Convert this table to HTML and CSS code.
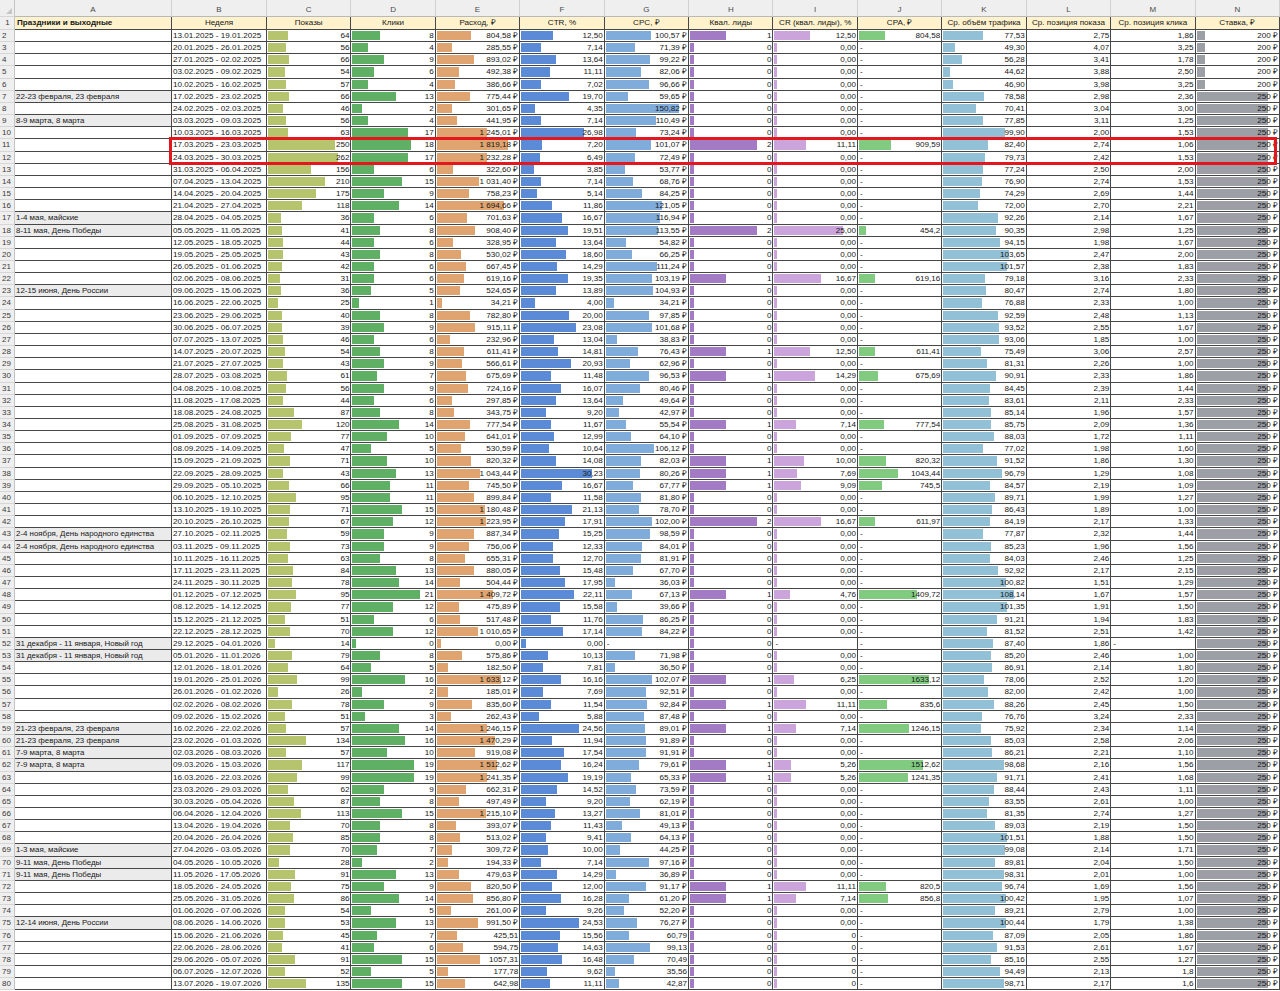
FILE: index.html
```html
<!DOCTYPE html>
<html lang="ru">
<head>
<meta charset="utf-8">
<title>Праздники и выходные</title>
<link rel="stylesheet" href="styles.css">
</head>
<body>
<div class="sheet">
<div class="row letters"><div class="rn corner"></div><div>A</div><div>B</div><div>C</div><div>D</div><div>E</div><div>F</div><div>G</div><div>H</div><div>I</div><div>J</div><div>K</div><div>L</div><div>M</div><div>N</div></div>
<div class="row head"><div class="rn">1</div><div class="a">Праздники и выходные</div><div>Неделя</div><div>Показы</div><div>Клики</div><div>Расход, ₽</div><div>CTR, %</div><div>CPC, ₽</div><div>Квал. лиды</div><div>CR (квал. лиды), %</div><div>CPA, ₽</div><div>Ср. объём трафика</div><div>Ср. позиция показа</div><div>Ср. позиция клика</div><div>Ставка, ₽</div></div>
<div class="row"><div class="rn">2</div><div class="a"></div><div class="b">13.01.2025 - 19.01.2025</div><div class="n bc" style="--v:64">64</div><div class="n bd" style="--v:8">8</div><div class="n be" style="--v:804.58">804,58 ₽</div><div class="n bf" style="--v:12.5">12,50</div><div class="n bg" style="--v:100.57">100,57 ₽</div><div class="n bh" style="--v:1">1</div><div class="n bi" style="--v:12.5">12,50</div><div class="n bj" style="--v:804.58">804,58</div><div class="n bk" style="--v:77.53">77,53</div><div class="n">2,75</div><div class="n">1,86</div><div class="n bn" style="--v:200">200 ₽</div></div>
<div class="row"><div class="rn">3</div><div class="a"></div><div class="b">20.01.2025 - 26.01.2025</div><div class="n bc" style="--v:56">56</div><div class="n bd" style="--v:4">4</div><div class="n be" style="--v:285.55">285,55 ₽</div><div class="n bf" style="--v:7.14">7,14</div><div class="n bg" style="--v:71.39">71,39 ₽</div><div class="n bh" style="--v:0">0</div><div class="n bi" style="--v:0">0,00</div><div class="d">-</div><div class="n bk" style="--v:49.30">49,30</div><div class="n">4,07</div><div class="n">3,25</div><div class="n bn" style="--v:200">200 ₽</div></div>
<div class="row"><div class="rn">4</div><div class="a"></div><div class="b">27.01.2025 - 02.02.2025</div><div class="n bc" style="--v:66">66</div><div class="n bd" style="--v:9">9</div><div class="n be" style="--v:893.02">893,02 ₽</div><div class="n bf" style="--v:13.64">13,64</div><div class="n bg" style="--v:99.22">99,22 ₽</div><div class="n bh" style="--v:0">0</div><div class="n bi" style="--v:0">0,00</div><div class="d">-</div><div class="n bk" style="--v:56.28">56,28</div><div class="n">3,41</div><div class="n">1,78</div><div class="n bn" style="--v:200">200 ₽</div></div>
<div class="row"><div class="rn">5</div><div class="a"></div><div class="b">03.02.2025 - 09.02.2025</div><div class="n bc" style="--v:54">54</div><div class="n bd" style="--v:6">6</div><div class="n be" style="--v:492.38">492,38 ₽</div><div class="n bf" style="--v:11.11">11,11</div><div class="n bg" style="--v:82.06">82,06 ₽</div><div class="n bh" style="--v:0">0</div><div class="n bi" style="--v:0">0,00</div><div class="d">-</div><div class="n bk" style="--v:44.62">44,62</div><div class="n">3,88</div><div class="n">2,50</div><div class="n bn" style="--v:200">200 ₽</div></div>
<div class="row"><div class="rn">6</div><div class="a"></div><div class="b">10.02.2025 - 16.02.2025</div><div class="n bc" style="--v:57">57</div><div class="n bd" style="--v:4">4</div><div class="n be" style="--v:386.66">386,66 ₽</div><div class="n bf" style="--v:7.02">7,02</div><div class="n bg" style="--v:96.66">96,66 ₽</div><div class="n bh" style="--v:0">0</div><div class="n bi" style="--v:0">0,00</div><div class="d">-</div><div class="n bk" style="--v:46.90">46,90</div><div class="n">3,98</div><div class="n">3,25</div><div class="n bn" style="--v:200">200 ₽</div></div>
<div class="row"><div class="rn">7</div><div class="a hol">22-23 февраля, 23 февраля</div><div class="b">17.02.2025 - 23.02.2025</div><div class="n bc" style="--v:66">66</div><div class="n bd" style="--v:13">13</div><div class="n be" style="--v:775.44">775,44 ₽</div><div class="n bf" style="--v:19.70">19,70</div><div class="n bg" style="--v:59.65">59,65 ₽</div><div class="n bh" style="--v:0">0</div><div class="n bi" style="--v:0">0,00</div><div class="d">-</div><div class="n bk" style="--v:78.58">78,58</div><div class="n">2,98</div><div class="n">2,36</div><div class="n bn" style="--v:250">250 ₽</div></div>
<div class="row"><div class="rn">8</div><div class="a"></div><div class="b">24.02.2025 - 02.03.2025</div><div class="n bc" style="--v:46">46</div><div class="n bd" style="--v:2">2</div><div class="n be" style="--v:301.65">301,65 ₽</div><div class="n bf" style="--v:4.35">4,35</div><div class="n bg" style="--v:150.82">150,82 ₽</div><div class="n bh" style="--v:0">0</div><div class="n bi" style="--v:0">0,00</div><div class="d">-</div><div class="n bk" style="--v:70.41">70,41</div><div class="n">3,04</div><div class="n">3,00</div><div class="n bn" style="--v:250">250 ₽</div></div>
<div class="row"><div class="rn">9</div><div class="a hol">8-9 марта, 8 марта</div><div class="b">03.03.2025 - 09.03.2025</div><div class="n bc" style="--v:56">56</div><div class="n bd" style="--v:4">4</div><div class="n be" style="--v:441.95">441,95 ₽</div><div class="n bf" style="--v:7.14">7,14</div><div class="n bg" style="--v:110.49">110,49 ₽</div><div class="n bh" style="--v:0">0</div><div class="n bi" style="--v:0">0,00</div><div class="d">-</div><div class="n bk" style="--v:77.85">77,85</div><div class="n">3,11</div><div class="n">1,25</div><div class="n bn" style="--v:250">250 ₽</div></div>
<div class="row"><div class="rn">10</div><div class="a"></div><div class="b">10.03.2025 - 16.03.2025</div><div class="n bc" style="--v:63">63</div><div class="n bd" style="--v:17">17</div><div class="n be" style="--v:1245.01">1 245,01 ₽</div><div class="n bf" style="--v:26.98">26,98</div><div class="n bg" style="--v:73.24">73,24 ₽</div><div class="n bh" style="--v:0">0</div><div class="n bi" style="--v:0">0,00</div><div class="d">-</div><div class="n bk" style="--v:99.90">99,90</div><div class="n">2,00</div><div class="n">1,53</div><div class="n bn" style="--v:250">250 ₽</div></div>
<div class="row"><div class="rn">11</div><div class="a"></div><div class="b">17.03.2025 - 23.03.2025</div><div class="n bc" style="--v:250">250</div><div class="n bd" style="--v:18">18</div><div class="n be" style="--v:1819.18">1 819,18 ₽</div><div class="n bf" style="--v:7.20">7,20</div><div class="n bg" style="--v:101.07">101,07 ₽</div><div class="n bh" style="--v:2">2</div><div class="n bi" style="--v:11.11">11,11</div><div class="n bj" style="--v:909.59">909,59</div><div class="n bk" style="--v:82.40">82,40</div><div class="n">2,74</div><div class="n">1,06</div><div class="n bn" style="--v:250">250 ₽</div></div>
<div class="row"><div class="rn">12</div><div class="a"></div><div class="b">24.03.2025 - 30.03.2025</div><div class="n bc" style="--v:262">262</div><div class="n bd" style="--v:17">17</div><div class="n be" style="--v:1232.28">1 232,28 ₽</div><div class="n bf" style="--v:6.49">6,49</div><div class="n bg" style="--v:72.49">72,49 ₽</div><div class="n bh" style="--v:0">0</div><div class="n bi" style="--v:0">0,00</div><div class="d">-</div><div class="n bk" style="--v:79.73">79,73</div><div class="n">2,42</div><div class="n">1,53</div><div class="n bn" style="--v:250">250 ₽</div></div>
<div class="row"><div class="rn">13</div><div class="a"></div><div class="b">31.03.2025 - 06.04.2025</div><div class="n bc" style="--v:156">156</div><div class="n bd" style="--v:6">6</div><div class="n be" style="--v:322.60">322,60 ₽</div><div class="n bf" style="--v:3.85">3,85</div><div class="n bg" style="--v:53.77">53,77 ₽</div><div class="n bh" style="--v:0">0</div><div class="n bi" style="--v:0">0,00</div><div class="d">-</div><div class="n bk" style="--v:77.24">77,24</div><div class="n">2,50</div><div class="n">2,00</div><div class="n bn" style="--v:250">250 ₽</div></div>
<div class="row"><div class="rn">14</div><div class="a"></div><div class="b">07.04.2025 - 13.04.2025</div><div class="n bc" style="--v:210">210</div><div class="n bd" style="--v:15">15</div><div class="n be" style="--v:1031.40">1 031,40 ₽</div><div class="n bf" style="--v:7.14">7,14</div><div class="n bg" style="--v:68.76">68,76 ₽</div><div class="n bh" style="--v:0">0</div><div class="n bi" style="--v:0">0,00</div><div class="d">-</div><div class="n bk" style="--v:76.90">76,90</div><div class="n">2,74</div><div class="n">1,53</div><div class="n bn" style="--v:250">250 ₽</div></div>
<div class="row"><div class="rn">15</div><div class="a"></div><div class="b">14.04.2025 - 20.04.2025</div><div class="n bc" style="--v:175">175</div><div class="n bd" style="--v:9">9</div><div class="n be" style="--v:758.23">758,23 ₽</div><div class="n bf" style="--v:5.14">5,14</div><div class="n bg" style="--v:84.25">84,25 ₽</div><div class="n bh" style="--v:0">0</div><div class="n bi" style="--v:0">0,00</div><div class="d">-</div><div class="n bk" style="--v:74.29">74,29</div><div class="n">2,69</div><div class="n">1,44</div><div class="n bn" style="--v:250">250 ₽</div></div>
<div class="row"><div class="rn">16</div><div class="a"></div><div class="b">21.04.2025 - 27.04.2025</div><div class="n bc" style="--v:118">118</div><div class="n bd" style="--v:14">14</div><div class="n be" style="--v:1694.66">1 694,66 ₽</div><div class="n bf" style="--v:11.86">11,86</div><div class="n bg" style="--v:121.05">121,05 ₽</div><div class="n bh" style="--v:0">0</div><div class="n bi" style="--v:0">0,00</div><div class="d">-</div><div class="n bk" style="--v:72.00">72,00</div><div class="n">2,70</div><div class="n">2,21</div><div class="n bn" style="--v:250">250 ₽</div></div>
<div class="row"><div class="rn">17</div><div class="a hol">1-4 мая, майские</div><div class="b">28.04.2025 - 04.05.2025</div><div class="n bc" style="--v:36">36</div><div class="n bd" style="--v:6">6</div><div class="n be" style="--v:701.63">701,63 ₽</div><div class="n bf" style="--v:16.67">16,67</div><div class="n bg" style="--v:116.94">116,94 ₽</div><div class="n bh" style="--v:0">0</div><div class="n bi" style="--v:0">0,00</div><div class="d">-</div><div class="n bk" style="--v:92.26">92,26</div><div class="n">2,14</div><div class="n">1,67</div><div class="n bn" style="--v:250">250 ₽</div></div>
<div class="row"><div class="rn">18</div><div class="a hol">8-11 мая, День Победы</div><div class="b">05.05.2025 - 11.05.2025</div><div class="n bc" style="--v:41">41</div><div class="n bd" style="--v:8">8</div><div class="n be" style="--v:908.40">908,40 ₽</div><div class="n bf" style="--v:19.51">19,51</div><div class="n bg" style="--v:113.55">113,55 ₽</div><div class="n bh" style="--v:2">2</div><div class="n bi" style="--v:25">25,00</div><div class="n bj" style="--v:454.2">454,2</div><div class="n bk" style="--v:90.35">90,35</div><div class="n">2,98</div><div class="n">1,25</div><div class="n bn" style="--v:250">250 ₽</div></div>
<div class="row"><div class="rn">19</div><div class="a"></div><div class="b">12.05.2025 - 18.05.2025</div><div class="n bc" style="--v:44">44</div><div class="n bd" style="--v:6">6</div><div class="n be" style="--v:328.95">328,95 ₽</div><div class="n bf" style="--v:13.64">13,64</div><div class="n bg" style="--v:54.82">54,82 ₽</div><div class="n bh" style="--v:0">0</div><div class="n bi" style="--v:0">0,00</div><div class="d">-</div><div class="n bk" style="--v:94.15">94,15</div><div class="n">1,98</div><div class="n">1,67</div><div class="n bn" style="--v:250">250 ₽</div></div>
<div class="row"><div class="rn">20</div><div class="a"></div><div class="b">19.05.2025 - 25.05.2025</div><div class="n bc" style="--v:43">43</div><div class="n bd" style="--v:8">8</div><div class="n be" style="--v:530.02">530,02 ₽</div><div class="n bf" style="--v:18.60">18,60</div><div class="n bg" style="--v:66.25">66,25 ₽</div><div class="n bh" style="--v:0">0</div><div class="n bi" style="--v:0">0,00</div><div class="d">-</div><div class="n bk" style="--v:103.65">103,65</div><div class="n">2,47</div><div class="n">2,00</div><div class="n bn" style="--v:250">250 ₽</div></div>
<div class="row"><div class="rn">21</div><div class="a"></div><div class="b">26.05.2025 - 01.06.2025</div><div class="n bc" style="--v:42">42</div><div class="n bd" style="--v:6">6</div><div class="n be" style="--v:667.45">667,45 ₽</div><div class="n bf" style="--v:14.29">14,29</div><div class="n bg" style="--v:111.24">111,24 ₽</div><div class="n bh" style="--v:0">0</div><div class="n bi" style="--v:0">0,00</div><div class="d">-</div><div class="n bk" style="--v:101.57">101,57</div><div class="n">2,38</div><div class="n">1,83</div><div class="n bn" style="--v:250">250 ₽</div></div>
<div class="row"><div class="rn">22</div><div class="a"></div><div class="b">02.06.2025 - 08.06.2025</div><div class="n bc" style="--v:31">31</div><div class="n bd" style="--v:6">6</div><div class="n be" style="--v:619.16">619,16 ₽</div><div class="n bf" style="--v:19.35">19,35</div><div class="n bg" style="--v:103.19">103,19 ₽</div><div class="n bh" style="--v:1">1</div><div class="n bi" style="--v:16.67">16,67</div><div class="n bj" style="--v:619.16">619,16</div><div class="n bk" style="--v:79.18">79,18</div><div class="n">3,16</div><div class="n">2,33</div><div class="n bn" style="--v:250">250 ₽</div></div>
<div class="row"><div class="rn">23</div><div class="a hol">12-15 июня, День России</div><div class="b">09.06.2025 - 15.06.2025</div><div class="n bc" style="--v:36">36</div><div class="n bd" style="--v:5">5</div><div class="n be" style="--v:524.65">524,65 ₽</div><div class="n bf" style="--v:13.89">13,89</div><div class="n bg" style="--v:104.93">104,93 ₽</div><div class="n bh" style="--v:0">0</div><div class="n bi" style="--v:0">0,00</div><div class="d">-</div><div class="n bk" style="--v:80.47">80,47</div><div class="n">2,74</div><div class="n">1,80</div><div class="n bn" style="--v:250">250 ₽</div></div>
<div class="row"><div class="rn">24</div><div class="a"></div><div class="b">16.06.2025 - 22.06.2025</div><div class="n bc" style="--v:25">25</div><div class="n bd" style="--v:1">1</div><div class="n be" style="--v:34.21">34,21 ₽</div><div class="n bf" style="--v:4.00">4,00</div><div class="n bg" style="--v:34.21">34,21 ₽</div><div class="n bh" style="--v:0">0</div><div class="n bi" style="--v:0">0,00</div><div class="d">-</div><div class="n bk" style="--v:76.88">76,88</div><div class="n">2,33</div><div class="n">1,00</div><div class="n bn" style="--v:250">250 ₽</div></div>
<div class="row"><div class="rn">25</div><div class="a"></div><div class="b">23.06.2025 - 29.06.2025</div><div class="n bc" style="--v:40">40</div><div class="n bd" style="--v:8">8</div><div class="n be" style="--v:782.80">782,80 ₽</div><div class="n bf" style="--v:20.00">20,00</div><div class="n bg" style="--v:97.85">97,85 ₽</div><div class="n bh" style="--v:0">0</div><div class="n bi" style="--v:0">0,00</div><div class="d">-</div><div class="n bk" style="--v:92.59">92,59</div><div class="n">2,48</div><div class="n">1,13</div><div class="n bn" style="--v:250">250 ₽</div></div>
<div class="row"><div class="rn">26</div><div class="a"></div><div class="b">30.06.2025 - 06.07.2025</div><div class="n bc" style="--v:39">39</div><div class="n bd" style="--v:9">9</div><div class="n be" style="--v:915.11">915,11 ₽</div><div class="n bf" style="--v:23.08">23,08</div><div class="n bg" style="--v:101.68">101,68 ₽</div><div class="n bh" style="--v:0">0</div><div class="n bi" style="--v:0">0,00</div><div class="d">-</div><div class="n bk" style="--v:93.52">93,52</div><div class="n">2,55</div><div class="n">1,67</div><div class="n bn" style="--v:250">250 ₽</div></div>
<div class="row"><div class="rn">27</div><div class="a"></div><div class="b">07.07.2025 - 13.07.2025</div><div class="n bc" style="--v:46">46</div><div class="n bd" style="--v:6">6</div><div class="n be" style="--v:232.96">232,96 ₽</div><div class="n bf" style="--v:13.04">13,04</div><div class="n bg" style="--v:38.83">38,83 ₽</div><div class="n bh" style="--v:0">0</div><div class="n bi" style="--v:0">0,00</div><div class="d">-</div><div class="n bk" style="--v:93.06">93,06</div><div class="n">1,85</div><div class="n">1,00</div><div class="n bn" style="--v:250">250 ₽</div></div>
<div class="row"><div class="rn">28</div><div class="a"></div><div class="b">14.07.2025 - 20.07.2025</div><div class="n bc" style="--v:54">54</div><div class="n bd" style="--v:8">8</div><div class="n be" style="--v:611.41">611,41 ₽</div><div class="n bf" style="--v:14.81">14,81</div><div class="n bg" style="--v:76.43">76,43 ₽</div><div class="n bh" style="--v:1">1</div><div class="n bi" style="--v:12.5">12,50</div><div class="n bj" style="--v:611.41">611,41</div><div class="n bk" style="--v:75.49">75,49</div><div class="n">3,06</div><div class="n">2,57</div><div class="n bn" style="--v:250">250 ₽</div></div>
<div class="row"><div class="rn">29</div><div class="a"></div><div class="b">21.07.2025 - 27.07.2025</div><div class="n bc" style="--v:43">43</div><div class="n bd" style="--v:9">9</div><div class="n be" style="--v:566.61">566,61 ₽</div><div class="n bf" style="--v:20.93">20,93</div><div class="n bg" style="--v:62.96">62,96 ₽</div><div class="n bh" style="--v:0">0</div><div class="n bi" style="--v:0">0,00</div><div class="d">-</div><div class="n bk" style="--v:81.31">81,31</div><div class="n">2,26</div><div class="n">1,00</div><div class="n bn" style="--v:250">250 ₽</div></div>
<div class="row"><div class="rn">30</div><div class="a"></div><div class="b">28.07.2025 - 03.08.2025</div><div class="n bc" style="--v:61">61</div><div class="n bd" style="--v:7">7</div><div class="n be" style="--v:675.69">675,69 ₽</div><div class="n bf" style="--v:11.48">11,48</div><div class="n bg" style="--v:96.53">96,53 ₽</div><div class="n bh" style="--v:1">1</div><div class="n bi" style="--v:14.29">14,29</div><div class="n bj" style="--v:675.69">675,69</div><div class="n bk" style="--v:90.91">90,91</div><div class="n">2,33</div><div class="n">1,86</div><div class="n bn" style="--v:250">250 ₽</div></div>
<div class="row"><div class="rn">31</div><div class="a"></div><div class="b">04.08.2025 - 10.08.2025</div><div class="n bc" style="--v:56">56</div><div class="n bd" style="--v:9">9</div><div class="n be" style="--v:724.16">724,16 ₽</div><div class="n bf" style="--v:16.07">16,07</div><div class="n bg" style="--v:80.46">80,46 ₽</div><div class="n bh" style="--v:0">0</div><div class="n bi" style="--v:0">0,00</div><div class="d">-</div><div class="n bk" style="--v:84.45">84,45</div><div class="n">2,39</div><div class="n">1,44</div><div class="n bn" style="--v:250">250 ₽</div></div>
<div class="row"><div class="rn">32</div><div class="a"></div><div class="b">11.08.2025 - 17.08.2025</div><div class="n bc" style="--v:44">44</div><div class="n bd" style="--v:6">6</div><div class="n be" style="--v:297.85">297,85 ₽</div><div class="n bf" style="--v:13.64">13,64</div><div class="n bg" style="--v:49.64">49,64 ₽</div><div class="n bh" style="--v:0">0</div><div class="n bi" style="--v:0">0,00</div><div class="d">-</div><div class="n bk" style="--v:83.61">83,61</div><div class="n">2,11</div><div class="n">2,33</div><div class="n bn" style="--v:250">250 ₽</div></div>
<div class="row"><div class="rn">33</div><div class="a"></div><div class="b">18.08.2025 - 24.08.2025</div><div class="n bc" style="--v:87">87</div><div class="n bd" style="--v:8">8</div><div class="n be" style="--v:343.75">343,75 ₽</div><div class="n bf" style="--v:9.20">9,20</div><div class="n bg" style="--v:42.97">42,97 ₽</div><div class="n bh" style="--v:0">0</div><div class="n bi" style="--v:0">0,00</div><div class="d">-</div><div class="n bk" style="--v:85.14">85,14</div><div class="n">1,96</div><div class="n">1,57</div><div class="n bn" style="--v:250">250 ₽</div></div>
<div class="row"><div class="rn">34</div><div class="a"></div><div class="b">25.08.2025 - 31.08.2025</div><div class="n bc" style="--v:120">120</div><div class="n bd" style="--v:14">14</div><div class="n be" style="--v:777.54">777,54 ₽</div><div class="n bf" style="--v:11.67">11,67</div><div class="n bg" style="--v:55.54">55,54 ₽</div><div class="n bh" style="--v:1">1</div><div class="n bi" style="--v:7.14">7,14</div><div class="n bj" style="--v:777.54">777,54</div><div class="n bk" style="--v:85.75">85,75</div><div class="n">2,09</div><div class="n">1,36</div><div class="n bn" style="--v:250">250 ₽</div></div>
<div class="row"><div class="rn">35</div><div class="a"></div><div class="b">01.09.2025 - 07.09.2025</div><div class="n bc" style="--v:77">77</div><div class="n bd" style="--v:10">10</div><div class="n be" style="--v:641.01">641,01 ₽</div><div class="n bf" style="--v:12.99">12,99</div><div class="n bg" style="--v:64.10">64,10 ₽</div><div class="n bh" style="--v:0">0</div><div class="n bi" style="--v:0">0,00</div><div class="d">-</div><div class="n bk" style="--v:88.03">88,03</div><div class="n">1,72</div><div class="n">1,11</div><div class="n bn" style="--v:250">250 ₽</div></div>
<div class="row"><div class="rn">36</div><div class="a"></div><div class="b">08.09.2025 - 14.09.2025</div><div class="n bc" style="--v:47">47</div><div class="n bd" style="--v:5">5</div><div class="n be" style="--v:530.59">530,59 ₽</div><div class="n bf" style="--v:10.64">10,64</div><div class="n bg" style="--v:106.12">106,12 ₽</div><div class="n bh" style="--v:0">0</div><div class="n bi" style="--v:0">0,00</div><div class="d">-</div><div class="n bk" style="--v:77.02">77,02</div><div class="n">1,98</div><div class="n">1,60</div><div class="n bn" style="--v:250">250 ₽</div></div>
<div class="row"><div class="rn">37</div><div class="a"></div><div class="b">15.09.2025 - 21.09.2025</div><div class="n bc" style="--v:71">71</div><div class="n bd" style="--v:10">10</div><div class="n be" style="--v:820.32">820,32 ₽</div><div class="n bf" style="--v:14.08">14,08</div><div class="n bg" style="--v:82.03">82,03 ₽</div><div class="n bh" style="--v:1">1</div><div class="n bi" style="--v:10">10,00</div><div class="n bj" style="--v:820.32">820,32</div><div class="n bk" style="--v:91.52">91,52</div><div class="n">1,86</div><div class="n">1,30</div><div class="n bn" style="--v:250">250 ₽</div></div>
<div class="row"><div class="rn">38</div><div class="a"></div><div class="b">22.09.2025 - 28.09.2025</div><div class="n bc" style="--v:43">43</div><div class="n bd" style="--v:13">13</div><div class="n be" style="--v:1043.44">1 043,44 ₽</div><div class="n bf" style="--v:30.23">30,23</div><div class="n bg" style="--v:80.26">80,26 ₽</div><div class="n bh" style="--v:1">1</div><div class="n bi" style="--v:7.69">7,69</div><div class="n bj" style="--v:1043.44">1043,44</div><div class="n bk" style="--v:96.79">96,79</div><div class="n">1,29</div><div class="n">1,08</div><div class="n bn" style="--v:250">250 ₽</div></div>
<div class="row"><div class="rn">39</div><div class="a"></div><div class="b">29.09.2025 - 05.10.2025</div><div class="n bc" style="--v:66">66</div><div class="n bd" style="--v:11">11</div><div class="n be" style="--v:745.50">745,50 ₽</div><div class="n bf" style="--v:16.67">16,67</div><div class="n bg" style="--v:67.77">67,77 ₽</div><div class="n bh" style="--v:1">1</div><div class="n bi" style="--v:9.09">9,09</div><div class="n bj" style="--v:745.5">745,5</div><div class="n bk" style="--v:84.57">84,57</div><div class="n">2,19</div><div class="n">1,09</div><div class="n bn" style="--v:250">250 ₽</div></div>
<div class="row"><div class="rn">40</div><div class="a"></div><div class="b">06.10.2025 - 12.10.2025</div><div class="n bc" style="--v:95">95</div><div class="n bd" style="--v:11">11</div><div class="n be" style="--v:899.84">899,84 ₽</div><div class="n bf" style="--v:11.58">11,58</div><div class="n bg" style="--v:81.80">81,80 ₽</div><div class="n bh" style="--v:0">0</div><div class="n bi" style="--v:0">0,00</div><div class="d">-</div><div class="n bk" style="--v:89.71">89,71</div><div class="n">1,99</div><div class="n">1,27</div><div class="n bn" style="--v:250">250 ₽</div></div>
<div class="row"><div class="rn">41</div><div class="a"></div><div class="b">13.10.2025 - 19.10.2025</div><div class="n bc" style="--v:71">71</div><div class="n bd" style="--v:15">15</div><div class="n be" style="--v:1180.48">1 180,48 ₽</div><div class="n bf" style="--v:21.13">21,13</div><div class="n bg" style="--v:78.70">78,70 ₽</div><div class="n bh" style="--v:0">0</div><div class="n bi" style="--v:0">0,00</div><div class="d">-</div><div class="n bk" style="--v:86.43">86,43</div><div class="n">1,89</div><div class="n">1,00</div><div class="n bn" style="--v:250">250 ₽</div></div>
<div class="row"><div class="rn">42</div><div class="a"></div><div class="b">20.10.2025 - 26.10.2025</div><div class="n bc" style="--v:67">67</div><div class="n bd" style="--v:12">12</div><div class="n be" style="--v:1223.95">1 223,95 ₽</div><div class="n bf" style="--v:17.91">17,91</div><div class="n bg" style="--v:102.00">102,00 ₽</div><div class="n bh" style="--v:2">2</div><div class="n bi" style="--v:16.67">16,67</div><div class="n bj" style="--v:611.97">611,97</div><div class="n bk" style="--v:84.19">84,19</div><div class="n">2,17</div><div class="n">1,33</div><div class="n bn" style="--v:250">250 ₽</div></div>
<div class="row"><div class="rn">43</div><div class="a hol">2-4 ноября, День народного единства</div><div class="b">27.10.2025 - 02.11.2025</div><div class="n bc" style="--v:59">59</div><div class="n bd" style="--v:9">9</div><div class="n be" style="--v:887.34">887,34 ₽</div><div class="n bf" style="--v:15.25">15,25</div><div class="n bg" style="--v:98.59">98,59 ₽</div><div class="n bh" style="--v:0">0</div><div class="n bi" style="--v:0">0,00</div><div class="d">-</div><div class="n bk" style="--v:77.87">77,87</div><div class="n">2,32</div><div class="n">1,44</div><div class="n bn" style="--v:250">250 ₽</div></div>
<div class="row"><div class="rn">44</div><div class="a hol">2-4 ноября, День народного единства</div><div class="b">03.11.2025 - 09.11.2025</div><div class="n bc" style="--v:73">73</div><div class="n bd" style="--v:9">9</div><div class="n be" style="--v:756.06">756,06 ₽</div><div class="n bf" style="--v:12.33">12,33</div><div class="n bg" style="--v:84.01">84,01 ₽</div><div class="n bh" style="--v:0">0</div><div class="n bi" style="--v:0">0,00</div><div class="d">-</div><div class="n bk" style="--v:85.23">85,23</div><div class="n">1,96</div><div class="n">1,56</div><div class="n bn" style="--v:250">250 ₽</div></div>
<div class="row"><div class="rn">45</div><div class="a"></div><div class="b">10.11.2025 - 16.11.2025</div><div class="n bc" style="--v:63">63</div><div class="n bd" style="--v:8">8</div><div class="n be" style="--v:655.31">655,31 ₽</div><div class="n bf" style="--v:12.70">12,70</div><div class="n bg" style="--v:81.91">81,91 ₽</div><div class="n bh" style="--v:0">0</div><div class="n bi" style="--v:0">0,00</div><div class="d">-</div><div class="n bk" style="--v:84.03">84,03</div><div class="n">2,46</div><div class="n">1,25</div><div class="n bn" style="--v:250">250 ₽</div></div>
<div class="row"><div class="rn">46</div><div class="a"></div><div class="b">17.11.2025 - 23.11.2025</div><div class="n bc" style="--v:84">84</div><div class="n bd" style="--v:13">13</div><div class="n be" style="--v:880.05">880,05 ₽</div><div class="n bf" style="--v:15.48">15,48</div><div class="n bg" style="--v:67.70">67,70 ₽</div><div class="n bh" style="--v:0">0</div><div class="n bi" style="--v:0">0,00</div><div class="d">-</div><div class="n bk" style="--v:92.92">92,92</div><div class="n">2,17</div><div class="n">2,15</div><div class="n bn" style="--v:250">250 ₽</div></div>
<div class="row"><div class="rn">47</div><div class="a"></div><div class="b">24.11.2025 - 30.11.2025</div><div class="n bc" style="--v:78">78</div><div class="n bd" style="--v:14">14</div><div class="n be" style="--v:504.44">504,44 ₽</div><div class="n bf" style="--v:17.95">17,95</div><div class="n bg" style="--v:36.03">36,03 ₽</div><div class="n bh" style="--v:0">0</div><div class="n bi" style="--v:0">0,00</div><div class="d">-</div><div class="n bk" style="--v:100.82">100,82</div><div class="n">1,51</div><div class="n">1,29</div><div class="n bn" style="--v:250">250 ₽</div></div>
<div class="row"><div class="rn">48</div><div class="a"></div><div class="b">01.12.2025 - 07.12.2025</div><div class="n bc" style="--v:95">95</div><div class="n bd" style="--v:21">21</div><div class="n be" style="--v:1409.72">1 409,72 ₽</div><div class="n bf" style="--v:22.11">22,11</div><div class="n bg" style="--v:67.13">67,13 ₽</div><div class="n bh" style="--v:1">1</div><div class="n bi" style="--v:4.76">4,76</div><div class="n bj" style="--v:1409.72">1409,72</div><div class="n bk" style="--v:108.14">108,14</div><div class="n">1,67</div><div class="n">1,57</div><div class="n bn" style="--v:250">250 ₽</div></div>
<div class="row"><div class="rn">49</div><div class="a"></div><div class="b">08.12.2025 - 14.12.2025</div><div class="n bc" style="--v:77">77</div><div class="n bd" style="--v:12">12</div><div class="n be" style="--v:475.89">475,89 ₽</div><div class="n bf" style="--v:15.58">15,58</div><div class="n bg" style="--v:39.66">39,66 ₽</div><div class="n bh" style="--v:0">0</div><div class="n bi" style="--v:0">0,00</div><div class="d">-</div><div class="n bk" style="--v:101.35">101,35</div><div class="n">1,91</div><div class="n">1,50</div><div class="n bn" style="--v:250">250 ₽</div></div>
<div class="row"><div class="rn">50</div><div class="a"></div><div class="b">15.12.2025 - 21.12.2025</div><div class="n bc" style="--v:51">51</div><div class="n bd" style="--v:6">6</div><div class="n be" style="--v:517.48">517,48 ₽</div><div class="n bf" style="--v:11.76">11,76</div><div class="n bg" style="--v:86.25">86,25 ₽</div><div class="n bh" style="--v:0">0</div><div class="n bi" style="--v:0">0,00</div><div class="d">-</div><div class="n bk" style="--v:91.21">91,21</div><div class="n">1,94</div><div class="n">1,83</div><div class="n bn" style="--v:250">250 ₽</div></div>
<div class="row"><div class="rn">51</div><div class="a"></div><div class="b">22.12.2025 - 28.12.2025</div><div class="n bc" style="--v:70">70</div><div class="n bd" style="--v:12">12</div><div class="n be" style="--v:1010.65">1 010,65 ₽</div><div class="n bf" style="--v:17.14">17,14</div><div class="n bg" style="--v:84.22">84,22 ₽</div><div class="n bh" style="--v:0">0</div><div class="n bi" style="--v:0">0,00</div><div class="d">-</div><div class="n bk" style="--v:81.52">81,52</div><div class="n">2,51</div><div class="n">1,42</div><div class="n bn" style="--v:250">250 ₽</div></div>
<div class="row"><div class="rn">52</div><div class="a hol">31 декабря - 11 января, Новый год</div><div class="b">29.12.2025 - 04.01.2026</div><div class="n bc" style="--v:14">14</div><div class="n bd" style="--v:0">0</div><div class="n be" style="--v:0">0,00 ₽</div><div class="n bf" style="--v:0">0,00</div><div class="d">-</div><div class="n bh" style="--v:0">0</div><div class="d">-</div><div class="d">-</div><div class="n bk" style="--v:87.40">87,40</div><div class="n">1,86</div><div class="d">-</div><div class="n bn" style="--v:250">250 ₽</div></div>
<div class="row"><div class="rn">53</div><div class="a hol">31 декабря - 11 января, Новый год</div><div class="b">05.01.2026 - 11.01.2026</div><div class="n bc" style="--v:79">79</div><div class="n bd" style="--v:8">8</div><div class="n be" style="--v:575.86">575,86 ₽</div><div class="n bf" style="--v:10.13">10,13</div><div class="n bg" style="--v:71.98">71,98 ₽</div><div class="n bh" style="--v:0">0</div><div class="n bi" style="--v:0">0,00</div><div class="d">-</div><div class="n bk" style="--v:85.20">85,20</div><div class="n">2,46</div><div class="n">1,00</div><div class="n bn" style="--v:250">250 ₽</div></div>
<div class="row"><div class="rn">54</div><div class="a"></div><div class="b">12.01.2026 - 18.01.2026</div><div class="n bc" style="--v:64">64</div><div class="n bd" style="--v:5">5</div><div class="n be" style="--v:182.50">182,50 ₽</div><div class="n bf" style="--v:7.81">7,81</div><div class="n bg" style="--v:36.50">36,50 ₽</div><div class="n bh" style="--v:0">0</div><div class="n bi" style="--v:0">0,00</div><div class="d">-</div><div class="n bk" style="--v:86.91">86,91</div><div class="n">2,14</div><div class="n">1,80</div><div class="n bn" style="--v:250">250 ₽</div></div>
<div class="row"><div class="rn">55</div><div class="a"></div><div class="b">19.01.2026 - 25.01.2026</div><div class="n bc" style="--v:99">99</div><div class="n bd" style="--v:16">16</div><div class="n be" style="--v:1633.12">1 633,12 ₽</div><div class="n bf" style="--v:16.16">16,16</div><div class="n bg" style="--v:102.07">102,07 ₽</div><div class="n bh" style="--v:1">1</div><div class="n bi" style="--v:6.25">6,25</div><div class="n bj" style="--v:1633.12">1633,12</div><div class="n bk" style="--v:78.06">78,06</div><div class="n">2,52</div><div class="n">1,20</div><div class="n bn" style="--v:250">250 ₽</div></div>
<div class="row"><div class="rn">56</div><div class="a"></div><div class="b">26.01.2026 - 01.02.2026</div><div class="n bc" style="--v:26">26</div><div class="n bd" style="--v:2">2</div><div class="n be" style="--v:185.01">185,01 ₽</div><div class="n bf" style="--v:7.69">7,69</div><div class="n bg" style="--v:92.51">92,51 ₽</div><div class="n bh" style="--v:0">0</div><div class="n bi" style="--v:0">0,00</div><div class="d">-</div><div class="n bk" style="--v:82.00">82,00</div><div class="n">2,42</div><div class="n">1,00</div><div class="n bn" style="--v:250">250 ₽</div></div>
<div class="row"><div class="rn">57</div><div class="a"></div><div class="b">02.02.2026 - 08.02.2026</div><div class="n bc" style="--v:78">78</div><div class="n bd" style="--v:9">9</div><div class="n be" style="--v:835.60">835,60 ₽</div><div class="n bf" style="--v:11.54">11,54</div><div class="n bg" style="--v:92.84">92,84 ₽</div><div class="n bh" style="--v:1">1</div><div class="n bi" style="--v:11.11">11,11</div><div class="n bj" style="--v:835.6">835,6</div><div class="n bk" style="--v:88.26">88,26</div><div class="n">2,45</div><div class="n">1,50</div><div class="n bn" style="--v:250">250 ₽</div></div>
<div class="row"><div class="rn">58</div><div class="a"></div><div class="b">09.02.2026 - 15.02.2026</div><div class="n bc" style="--v:51">51</div><div class="n bd" style="--v:3">3</div><div class="n be" style="--v:262.43">262,43 ₽</div><div class="n bf" style="--v:5.88">5,88</div><div class="n bg" style="--v:87.48">87,48 ₽</div><div class="n bh" style="--v:0">0</div><div class="n bi" style="--v:0">0,00</div><div class="d">-</div><div class="n bk" style="--v:76.76">76,76</div><div class="n">3,24</div><div class="n">2,33</div><div class="n bn" style="--v:250">250 ₽</div></div>
<div class="row"><div class="rn">59</div><div class="a hol">21-23 февраля, 23 февраля</div><div class="b">16.02.2026 - 22.02.2026</div><div class="n bc" style="--v:57">57</div><div class="n bd" style="--v:14">14</div><div class="n be" style="--v:1246.15">1 246,15 ₽</div><div class="n bf" style="--v:24.56">24,56</div><div class="n bg" style="--v:89.01">89,01 ₽</div><div class="n bh" style="--v:1">1</div><div class="n bi" style="--v:7.14">7,14</div><div class="n bj" style="--v:1246.15">1246,15</div><div class="n bk" style="--v:75.92">75,92</div><div class="n">2,34</div><div class="n">1,14</div><div class="n bn" style="--v:250">250 ₽</div></div>
<div class="row"><div class="rn">60</div><div class="a hol">21-23 февраля, 23 февраля</div><div class="b">23.02.2026 - 01.03.2026</div><div class="n bc" style="--v:134">134</div><div class="n bd" style="--v:16">16</div><div class="n be" style="--v:1470.29">1 470,29 ₽</div><div class="n bf" style="--v:11.94">11,94</div><div class="n bg" style="--v:91.89">91,89 ₽</div><div class="n bh" style="--v:0">0</div><div class="n bi" style="--v:0">0,00</div><div class="d">-</div><div class="n bk" style="--v:85.03">85,03</div><div class="n">2,58</div><div class="n">2,06</div><div class="n bn" style="--v:250">250 ₽</div></div>
<div class="row"><div class="rn">61</div><div class="a hol">7-9 марта, 8 марта</div><div class="b">02.03.2026 - 08.03.2026</div><div class="n bc" style="--v:57">57</div><div class="n bd" style="--v:10">10</div><div class="n be" style="--v:919.08">919,08 ₽</div><div class="n bf" style="--v:17.54">17,54</div><div class="n bg" style="--v:91.91">91,91 ₽</div><div class="n bh" style="--v:0">0</div><div class="n bi" style="--v:0">0,00</div><div class="d">-</div><div class="n bk" style="--v:86.21">86,21</div><div class="n">2,21</div><div class="n">1,10</div><div class="n bn" style="--v:250">250 ₽</div></div>
<div class="row"><div class="rn">62</div><div class="a hol">7-9 марта, 8 марта</div><div class="b">09.03.2026 - 15.03.2026</div><div class="n bc" style="--v:117">117</div><div class="n bd" style="--v:19">19</div><div class="n be" style="--v:1512.62">1 512,62 ₽</div><div class="n bf" style="--v:16.24">16,24</div><div class="n bg" style="--v:79.61">79,61 ₽</div><div class="n bh" style="--v:1">1</div><div class="n bi" style="--v:5.26">5,26</div><div class="n bj" style="--v:1512.62">1512,62</div><div class="n bk" style="--v:98.68">98,68</div><div class="n">2,16</div><div class="n">1,56</div><div class="n bn" style="--v:250">250 ₽</div></div>
<div class="row"><div class="rn">63</div><div class="a"></div><div class="b">16.03.2026 - 22.03.2026</div><div class="n bc" style="--v:99">99</div><div class="n bd" style="--v:19">19</div><div class="n be" style="--v:1241.35">1 241,35 ₽</div><div class="n bf" style="--v:19.19">19,19</div><div class="n bg" style="--v:65.33">65,33 ₽</div><div class="n bh" style="--v:1">1</div><div class="n bi" style="--v:5.26">5,26</div><div class="n bj" style="--v:1241.35">1241,35</div><div class="n bk" style="--v:91.71">91,71</div><div class="n">2,41</div><div class="n">1,68</div><div class="n bn" style="--v:250">250 ₽</div></div>
<div class="row"><div class="rn">64</div><div class="a"></div><div class="b">23.03.2026 - 29.03.2026</div><div class="n bc" style="--v:62">62</div><div class="n bd" style="--v:9">9</div><div class="n be" style="--v:662.31">662,31 ₽</div><div class="n bf" style="--v:14.52">14,52</div><div class="n bg" style="--v:73.59">73,59 ₽</div><div class="n bh" style="--v:0">0</div><div class="n bi" style="--v:0">0,00</div><div class="d">-</div><div class="n bk" style="--v:88.44">88,44</div><div class="n">2,43</div><div class="n">1,11</div><div class="n bn" style="--v:250">250 ₽</div></div>
<div class="row"><div class="rn">65</div><div class="a"></div><div class="b">30.03.2026 - 05.04.2026</div><div class="n bc" style="--v:87">87</div><div class="n bd" style="--v:8">8</div><div class="n be" style="--v:497.49">497,49 ₽</div><div class="n bf" style="--v:9.20">9,20</div><div class="n bg" style="--v:62.19">62,19 ₽</div><div class="n bh" style="--v:0">0</div><div class="n bi" style="--v:0">0,00</div><div class="d">-</div><div class="n bk" style="--v:83.55">83,55</div><div class="n">2,61</div><div class="n">1,00</div><div class="n bn" style="--v:250">250 ₽</div></div>
<div class="row"><div class="rn">66</div><div class="a"></div><div class="b">06.04.2026 - 12.04.2026</div><div class="n bc" style="--v:113">113</div><div class="n bd" style="--v:15">15</div><div class="n be" style="--v:1215.10">1 215,10 ₽</div><div class="n bf" style="--v:13.27">13,27</div><div class="n bg" style="--v:81.01">81,01 ₽</div><div class="n bh" style="--v:0">0</div><div class="n bi" style="--v:0">0,00</div><div class="d">-</div><div class="n bk" style="--v:81.35">81,35</div><div class="n">2,74</div><div class="n">1,27</div><div class="n bn" style="--v:250">250 ₽</div></div>
<div class="row"><div class="rn">67</div><div class="a"></div><div class="b">13.04.2026 - 19.04.2026</div><div class="n bc" style="--v:70">70</div><div class="n bd" style="--v:8">8</div><div class="n be" style="--v:393.07">393,07 ₽</div><div class="n bf" style="--v:11.43">11,43</div><div class="n bg" style="--v:49.13">49,13 ₽</div><div class="n bh" style="--v:0">0</div><div class="n bi" style="--v:0">0,00</div><div class="d">-</div><div class="n bk" style="--v:89.03">89,03</div><div class="n">2,19</div><div class="n">1,50</div><div class="n bn" style="--v:250">250 ₽</div></div>
<div class="row"><div class="rn">68</div><div class="a"></div><div class="b">20.04.2026 - 26.04.2026</div><div class="n bc" style="--v:85">85</div><div class="n bd" style="--v:8">8</div><div class="n be" style="--v:513.02">513,02 ₽</div><div class="n bf" style="--v:9.41">9,41</div><div class="n bg" style="--v:64.13">64,13 ₽</div><div class="n bh" style="--v:0">0</div><div class="n bi" style="--v:0">0,00</div><div class="d">-</div><div class="n bk" style="--v:101.51">101,51</div><div class="n">1,88</div><div class="n">1,50</div><div class="n bn" style="--v:250">250 ₽</div></div>
<div class="row"><div class="rn">69</div><div class="a hol">1-3 мая, майские</div><div class="b">27.04.2026 - 03.05.2026</div><div class="n bc" style="--v:70">70</div><div class="n bd" style="--v:7">7</div><div class="n be" style="--v:309.72">309,72 ₽</div><div class="n bf" style="--v:10.00">10,00</div><div class="n bg" style="--v:44.25">44,25 ₽</div><div class="n bh" style="--v:0">0</div><div class="n bi" style="--v:0">0,00</div><div class="d">-</div><div class="n bk" style="--v:99.08">99,08</div><div class="n">2,14</div><div class="n">1,71</div><div class="n bn" style="--v:250">250 ₽</div></div>
<div class="row"><div class="rn">70</div><div class="a hol">9-11 мая, День Победы</div><div class="b">04.05.2026 - 10.05.2026</div><div class="n bc" style="--v:28">28</div><div class="n bd" style="--v:2">2</div><div class="n be" style="--v:194.33">194,33 ₽</div><div class="n bf" style="--v:7.14">7,14</div><div class="n bg" style="--v:97.16">97,16 ₽</div><div class="n bh" style="--v:0">0</div><div class="n bi" style="--v:0">0,00</div><div class="d">-</div><div class="n bk" style="--v:89.81">89,81</div><div class="n">2,04</div><div class="n">1,50</div><div class="n bn" style="--v:250">250 ₽</div></div>
<div class="row"><div class="rn">71</div><div class="a hol">9-11 мая, День Победы</div><div class="b">11.05.2026 - 17.05.2026</div><div class="n bc" style="--v:91">91</div><div class="n bd" style="--v:13">13</div><div class="n be" style="--v:479.63">479,63 ₽</div><div class="n bf" style="--v:14.29">14,29</div><div class="n bg" style="--v:36.89">36,89 ₽</div><div class="n bh" style="--v:0">0</div><div class="n bi" style="--v:0">0,00</div><div class="d">-</div><div class="n bk" style="--v:98.31">98,31</div><div class="n">2,01</div><div class="n">1,00</div><div class="n bn" style="--v:250">250 ₽</div></div>
<div class="row"><div class="rn">72</div><div class="a"></div><div class="b">18.05.2026 - 24.05.2026</div><div class="n bc" style="--v:75">75</div><div class="n bd" style="--v:9">9</div><div class="n be" style="--v:820.50">820,50 ₽</div><div class="n bf" style="--v:12.00">12,00</div><div class="n bg" style="--v:91.17">91,17 ₽</div><div class="n bh" style="--v:1">1</div><div class="n bi" style="--v:11.11">11,11</div><div class="n bj" style="--v:820.5">820,5</div><div class="n bk" style="--v:96.74">96,74</div><div class="n">1,69</div><div class="n">1,56</div><div class="n bn" style="--v:250">250 ₽</div></div>
<div class="row"><div class="rn">73</div><div class="a"></div><div class="b">25.05.2026 - 31.05.2026</div><div class="n bc" style="--v:86">86</div><div class="n bd" style="--v:14">14</div><div class="n be" style="--v:856.80">856,80 ₽</div><div class="n bf" style="--v:16.28">16,28</div><div class="n bg" style="--v:61.20">61,20 ₽</div><div class="n bh" style="--v:1">1</div><div class="n bi" style="--v:7.14">7,14</div><div class="n bj" style="--v:856.8">856,8</div><div class="n bk" style="--v:100.42">100,42</div><div class="n">1,95</div><div class="n">1,07</div><div class="n bn" style="--v:250">250 ₽</div></div>
<div class="row"><div class="rn">74</div><div class="a"></div><div class="b">01.06.2026 - 07.06.2026</div><div class="n bc" style="--v:54">54</div><div class="n bd" style="--v:5">5</div><div class="n be" style="--v:261.00">261,00 ₽</div><div class="n bf" style="--v:9.26">9,26</div><div class="n bg" style="--v:52.20">52,20 ₽</div><div class="n bh" style="--v:0">0</div><div class="n bi" style="--v:0">0,00</div><div class="d">-</div><div class="n bk" style="--v:89.21">89,21</div><div class="n">2,79</div><div class="n">1,00</div><div class="n bn" style="--v:250">250 ₽</div></div>
<div class="row"><div class="rn">75</div><div class="a hol">12-14 июня, День России</div><div class="b">08.06.2026 - 14.06.2026</div><div class="n bc" style="--v:53">53</div><div class="n bd" style="--v:13">13</div><div class="n be" style="--v:991.50">991,50 ₽</div><div class="n bf" style="--v:24.53">24,53</div><div class="n bg" style="--v:76.27">76,27 ₽</div><div class="n bh" style="--v:0">0</div><div class="n bi" style="--v:0">0,00</div><div class="d">-</div><div class="n bk" style="--v:100.44">100,44</div><div class="n">1,79</div><div class="n">1,38</div><div class="n bn" style="--v:250">250 ₽</div></div>
<div class="row"><div class="rn">76</div><div class="a"></div><div class="b">15.06.2026 - 21.06.2026</div><div class="n bc" style="--v:45">45</div><div class="n bd" style="--v:7">7</div><div class="n be" style="--v:425.51">425,51</div><div class="n bf" style="--v:15.56">15,56</div><div class="n bg" style="--v:60.79">60,79</div><div class="n bh" style="--v:0">0</div><div class="n bi" style="--v:0">0</div><div class="d">-</div><div class="n bk" style="--v:87.09">87,09</div><div class="n">2,05</div><div class="n">1,86</div><div class="n bn" style="--v:250">250 ₽</div></div>
<div class="row"><div class="rn">77</div><div class="a"></div><div class="b">22.06.2026 - 28.06.2026</div><div class="n bc" style="--v:41">41</div><div class="n bd" style="--v:6">6</div><div class="n be" style="--v:594.75">594,75</div><div class="n bf" style="--v:14.63">14,63</div><div class="n bg" style="--v:99.13">99,13</div><div class="n bh" style="--v:0">0</div><div class="n bi" style="--v:0">0</div><div class="d">-</div><div class="n bk" style="--v:91.53">91,53</div><div class="n">2,61</div><div class="n">1,67</div><div class="n bn" style="--v:250">250 ₽</div></div>
<div class="row"><div class="rn">78</div><div class="a"></div><div class="b">29.06.2026 - 05.07.2026</div><div class="n bc" style="--v:91">91</div><div class="n bd" style="--v:15">15</div><div class="n be" style="--v:1057.31">1057,31</div><div class="n bf" style="--v:16.48">16,48</div><div class="n bg" style="--v:70.49">70,49</div><div class="n bh" style="--v:0">0</div><div class="n bi" style="--v:0">0</div><div class="d">-</div><div class="n bk" style="--v:85.16">85,16</div><div class="n">2,55</div><div class="n">1,27</div><div class="n bn" style="--v:250">250 ₽</div></div>
<div class="row"><div class="rn">79</div><div class="a"></div><div class="b">06.07.2026 - 12.07.2026</div><div class="n bc" style="--v:52">52</div><div class="n bd" style="--v:5">5</div><div class="n be" style="--v:177.78">177,78</div><div class="n bf" style="--v:9.62">9,62</div><div class="n bg" style="--v:35.56">35,56</div><div class="n bh" style="--v:0">0</div><div class="n bi" style="--v:0">0</div><div class="d">-</div><div class="n bk" style="--v:94.49">94,49</div><div class="n">2,13</div><div class="n">1,8</div><div class="n bn" style="--v:250">250 ₽</div></div>
<div class="row"><div class="rn">80</div><div class="a"></div><div class="b">13.07.2026 - 19.07.2026</div><div class="n bc" style="--v:135">135</div><div class="n bd" style="--v:15">15</div><div class="n be" style="--v:642.98">642,98</div><div class="n bf" style="--v:11.11">11,11</div><div class="n bg" style="--v:42.87">42,87</div><div class="n bh" style="--v:0">0</div><div class="n bi" style="--v:0">0</div><div class="d">-</div><div class="n bk" style="--v:98.71">98,71</div><div class="n">2,17</div><div class="n">1,6</div><div class="n bn" style="--v:250">250 ₽</div></div>
<div class="highlight"></div>
</div>
</body>
</html>
```
FILE: styles.css
```css
* { box-sizing: border-box; margin: 0; padding: 0; }
html, body { background: #ffffff; }
body {
  width: 1280px;
  height: 991px;
  overflow: hidden;
  font-family: "Liberation Sans", Arial, sans-serif;
  font-size: 8.1px;
  color: #181818;
}
.sheet { position: relative; width: 1280px; }
.row {
  display: grid;
  grid-template-columns: 15px 157px 95px repeat(12, 1fr);
  height: 12.17px;
}
.row > div {
  border-right: 1px solid #474747;
  border-bottom: 1px solid #474747;
  white-space: nowrap;
  overflow: hidden;
  line-height: 11px;
  padding: 0 1px;
}
.row > .rn {
  background: #efefef;
  color: #3a3a3a;
  border-right: 1px solid #c4c4c4;
  border-bottom: 1px solid #d6d6d6;
  padding-left: 2px;
  font-size: 8px;
}
.letters { height: 17px; background: #efefef; }
.letters > div {
  text-align: center;
  color: #4a4a4a;
  font-size: 8px;
  line-height: 12px;
  padding-top: 4px;
  border-right: 1px solid #d2d2d2;
  border-bottom: 1px solid #b8b8b8;
}
.letters > .corner { position: relative; }
.letters > .corner::after {
  content: "";
  position: absolute;
  right: 2px;
  bottom: 2px;
  border-left: 6px solid transparent;
  border-bottom: 6px solid #c6c6c6;
}
.head { height: 13px; }
.head > div {
  background: #fff2cc;
  text-align: center;
  line-height: 12px;
}
.head > .a { text-align: left; font-weight: bold; padding-left: 2px; }
.head > .rn { line-height: 12px; }
.a { padding-left: 2px; }
.row > .hol { background: #ebebeb; font-size: 7.9px; }
.b { padding-left: 2px; }
.n { text-align: right; }
.row > .d { text-align: left; padding-left: 2px; }

.bc, .bd, .be, .bf, .bg, .bh, .bi, .bj, .bk, .bn {
  background-image: linear-gradient(90deg, var(--bar) var(--w), transparent 0);
  background-repeat: no-repeat;
  background-position: 1px 1px;
  background-size: calc(100% - 2px) calc(100% - 2px);
}
.bc { --bar: #b6c46e; --w: calc(9% + (var(--v) - 14) / 248 * 78%); }
.bd { --bar: #5faf65; --w: calc(5% + var(--v) / 21 * 78%); }
.be { --bar: #dfa46f; --w: calc(5% + var(--v) / 1819.18 * 83%); }
.bf { --bar: #5b8ad6; --w: calc(6% + var(--v) / 30.23 * 80%); }
.bg { --bar: #80acdc; --w: calc(10% + (var(--v) - 34.21) / 116.61 * 80%); }
.bh { --bar: #a27bc4; --w: calc(5% + var(--v) / 2 * 78%); }
.bi { --bar: #caa4da; --w: calc(4% + var(--v) / 25 * 80%); }
.bj { --bar: #80cb80; --w: calc(9% + (var(--v) - 454.2) / 1178.92 * 78%); }
.bk { --bar: #91c0d7; --w: calc(9% + (var(--v) - 44.62) / 63.52 * 77%); }
.bn { --bar: #9c9fa6; --w: calc(10% + (var(--v) - 200) / 50 * 78%); }

.highlight {
  position: absolute;
  left: 169px;
  top: 137px;
  width: 1108px;
  height: 28px;
  border: 3px solid #e3171d;
  pointer-events: none;
}
```
